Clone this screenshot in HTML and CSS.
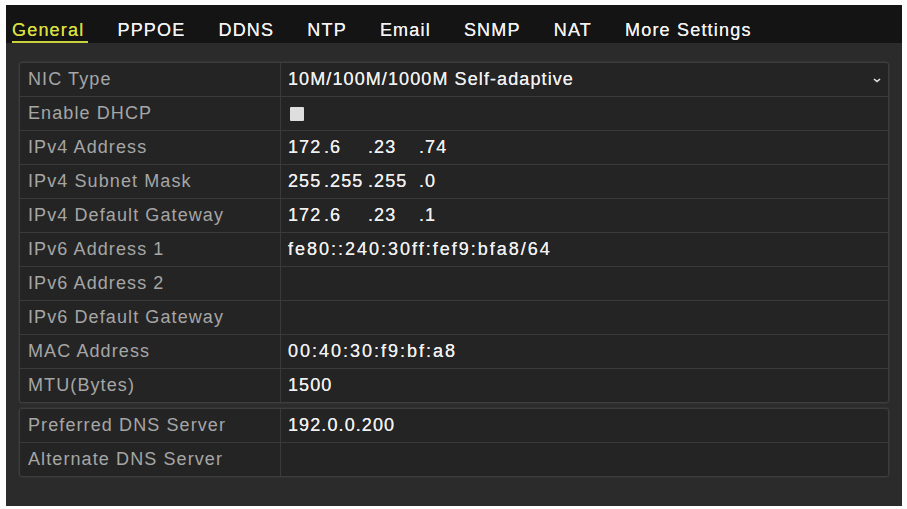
FILE: index.html
```html
<!DOCTYPE html>
<html lang="en">
<head>
<meta charset="utf-8">
<title>Network - General</title>
<link rel="stylesheet" href="styles.css">
</head>
<body>
<div class="panel">
  <nav class="tabs">
    <span class="tab active">General</span>
    <span class="tab">PPPOE</span>
    <span class="tab">DDNS</span>
    <span class="tab">NTP</span>
    <span class="tab">Email</span>
    <span class="tab">SNMP</span>
    <span class="tab">NAT</span>
    <span class="tab">More Settings</span>
  </nav>
  <div class="content">
    <div class="table">
      <div class="row">
        <div class="label">NIC Type</div>
        <div class="value select">
          <span>10M/100M/1000M Self-adaptive</span>
          <svg class="caret" width="8" height="5" viewBox="0 0 8 5"><polyline points="1,1 4,3.5 7,1" fill="none" stroke="#e8e8e8" stroke-width="1.6"/></svg>
        </div>
      </div>
      <div class="row">
        <div class="label">Enable DHCP</div>
        <div class="value"><span class="checkbox"></span></div>
      </div>
      <div class="row">
        <div class="label">IPv4 Address</div>
        <div class="value ip"><span class="o1">172</span><span class="o2">.6</span><span class="o3">.23</span><span>.74</span></div>
      </div>
      <div class="row">
        <div class="label">IPv4 Subnet Mask</div>
        <div class="value ip"><span class="o1">255</span><span class="o2">.255</span><span class="o3">.255</span><span>.0</span></div>
      </div>
      <div class="row">
        <div class="label">IPv4 Default Gateway</div>
        <div class="value ip"><span class="o1">172</span><span class="o2">.6</span><span class="o3">.23</span><span>.1</span></div>
      </div>
      <div class="row">
        <div class="label">IPv6 Address 1</div>
        <div class="value wide">fe80::240:30ff:fef9:bfa8/64</div>
      </div>
      <div class="row">
        <div class="label">IPv6 Address 2</div>
        <div class="value"></div>
      </div>
      <div class="row">
        <div class="label">IPv6 Default Gateway</div>
        <div class="value"></div>
      </div>
      <div class="row">
        <div class="label">MAC Address</div>
        <div class="value wide">00:40:30:f9:bf:a8</div>
      </div>
      <div class="row">
        <div class="label">MTU(Bytes)</div>
        <div class="value">1500</div>
      </div>
    </div>
    <div class="table">
      <div class="row">
        <div class="label">Preferred DNS Server</div>
        <div class="value">192.0.0.200</div>
      </div>
      <div class="row">
        <div class="label">Alternate DNS Server</div>
        <div class="value"></div>
      </div>
    </div>
  </div>
</div>
</body>
</html>
```
FILE: styles.css
```css
html, body {
  margin: 0;
  padding: 0;
  background: #fdfdfd;
}

body {
  font-family: "Liberation Sans", Arial, sans-serif;
}

.panel {
  margin: 5px 0 0 6px;
  width: 896px;
  height: 501px;
  background: #2b2b2b;
  display: flex;
  flex-direction: column;
}

.tabs {
  height: 38px;
  background: #141414;
  display: flex;
  align-items: flex-start;
  gap: 33px;
  padding-left: 6px;
  box-sizing: border-box;
}

.tab {
  font-size: 18px;
  letter-spacing: 1.2px;
  color: #f2f2f2;
  text-shadow: 0 0 0.4px #f2f2f2;
  padding-top: 15px;
  line-height: 20px;
  padding-bottom: 1px;
  border-bottom: 2px solid transparent;
}

.tab.active {
  color: #d7df3f;
  text-shadow: 0 0 0.4px #d7df3f;
  border-bottom-color: #c9d23a;
  padding-right: 4px;
  margin-right: -4px;
}

.content {
  padding: 19px 13px 0 13px;
  display: flex;
  flex-direction: column;
  gap: 5px;
}

.table {
  border: 1px solid #3d3d3d;
  border-radius: 3px;
  background: #242424;
  box-shadow: 0 0 1px 1px #333333;
  display: flex;
  flex-direction: column;
}

.row {
  display: grid;
  grid-template-columns: 261px 1fr;
  height: 33px;
  border-top: 1px solid #3a3a3a;
}

.row:first-child {
  border-top: none;
}

.label, .value {
  display: flex;
  align-items: center;
  font-size: 18px;
  letter-spacing: 1.1px;
  white-space: nowrap;
}

.label {
  padding-left: 8px;
  color: #a6a6a6;
  border-right: 1px solid #3a3a3a;
}

.value {
  padding-left: 7px;
  color: #f0f0f0;
  text-shadow: 0 0 0.4px #f0f0f0;
}

.value.wide {
  letter-spacing: 2px;
}

.select {
  justify-content: space-between;
  padding-right: 7px;
}

.caret {
  display: block;
  margin-top: 1px;
}

.checkbox {
  width: 14px;
  height: 14px;
  background: #dedede;
  border-radius: 1px;
  margin-left: 2px;
}

.ip span {
  display: inline-block;
}

.ip .o1 { width: 36px; }
.ip .o2 { width: 44px; }
.ip .o3 { width: 51px; }
```
